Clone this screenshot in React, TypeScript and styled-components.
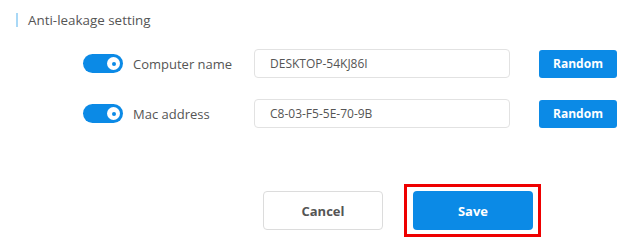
import styled, { createGlobalStyle } from "styled-components";

const GlobalStyle = createGlobalStyle`
  body {
    margin: 0;
    background: #fff;
    font-family: "Open Sans", "Noto Sans", sans-serif;
  }
`;

const fields = [
  { label: "Computer name", value: "DESKTOP-54KJ86I" },
  { label: "Mac address", value: "C8-03-F5-5E-70-9B" },
];

const App = () => {
  return (
    <Page>
      <GlobalStyle />
      <SectionTitle>Anti-leakage setting</SectionTitle>
      <Form>
        {fields.map((f) => (
          <Row key={f.label}>
            <Toggle $on>
              <Knob />
            </Toggle>
            <Label>{f.label}</Label>
            <Input value={f.value} readOnly />
            <SmallButton>Random</SmallButton>
          </Row>
        ))}
      </Form>
      <Footer>
        <CancelButton>Cancel</CancelButton>
        <Highlight>
          <SaveButton>Save</SaveButton>
        </Highlight>
      </Footer>
    </Page>
  );
};

export default App;

//styled-components
const Page = styled.div`
  width: 630px;
  height: 245px;
  box-sizing: border-box;
  padding-top: 13px;
  overflow: hidden;
`;

const SectionTitle = styled.div`
  margin-left: 16px;
  padding-left: 10px;
  border-left: 2px solid #a9d8f6;
  height: 14px;
  line-height: 14px;
  font-size: 13.4px;
  color: #555;
`;

const Form = styled.div`
  margin-top: 22px;
  padding-left: 83px;

  display: flex;
  flex-direction: column;
  gap: 21px;
`;

const Row = styled.div`
  display: flex;
  align-items: center;
  height: 29px;
`;

const Toggle = styled.div<{ $on?: boolean }>`
  width: 40px;
  height: 19px;
  border-radius: 10px;
  background: ${(p) => (p.$on ? "#0b8ae6" : "#ccc")};
  margin-right: 10px;
  position: relative;
  flex-shrink: 0;
`;

const Knob = styled.span`
  position: absolute;
  right: 3px;
  top: 3px;
  width: 13px;
  height: 13px;
  border-radius: 50%;
  background: #fff;

  &::after {
    content: "";
    position: absolute;
    left: 4.5px;
    top: 4.5px;
    width: 4px;
    height: 4px;
    border-radius: 50%;
    background: #0b8ae6;
  }
`;

const Label = styled.div`
  width: 121px;
  font-size: 13px;
  color: #555;
`;

const Input = styled.input`
  width: 256px;
  height: 29px;
  box-sizing: border-box;
  border: 1px solid #e2e2e2;
  border-radius: 4px;
  padding: 0 15px;
  font-family: inherit;
  font-size: 12px;
  color: #555;
  outline: none;
`;

const SmallButton = styled.button`
  margin-left: 29px;
  width: 78px;
  height: 28px;
  border: none;
  border-radius: 3px;
  background: #0b8ae6;
  color: #fff;
  font-family: inherit;
  font-size: 12px;
  font-weight: 700;
`;

const Footer = styled.div`
  margin-top: 63px;
  padding-left: 263px;

  display: flex;
  align-items: flex-start;
  gap: 30px;
`;

const FooterButton = styled.button`
  width: 120px;
  height: 39px;
  box-sizing: border-box;
  border-radius: 4px;
  font-family: inherit;
  font-size: 13px;
  font-weight: 700;
`;

const CancelButton = styled(FooterButton)`
  background: #fff;
  border: 1px solid #dcdcdc;
  color: #555;
`;

const SaveButton = styled(FooterButton)`
  display: block;
  background: #0b8ae6;
  border: none;
  color: #fff;
`;

// red annotation frame around the save button
const Highlight = styled.div`
  border: 3px solid #ee0000;
  padding: 4px 5px 4px 6px;
  margin: -7px -8px -7px -9px;
`;
